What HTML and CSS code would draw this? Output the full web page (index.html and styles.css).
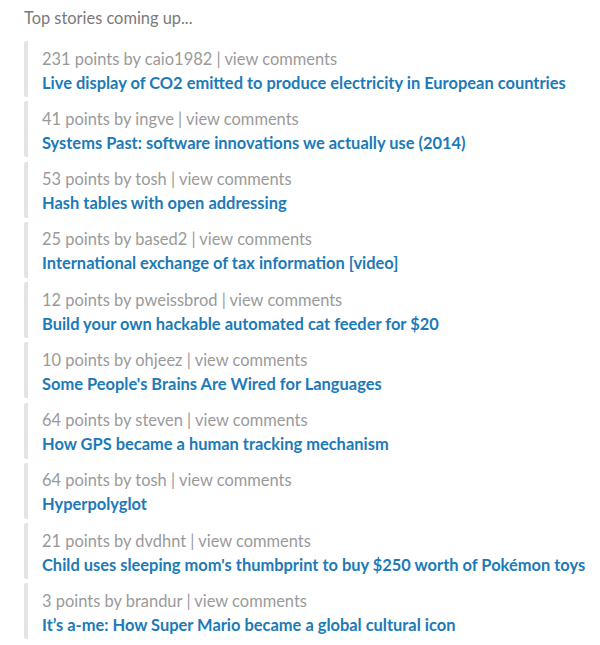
FILE: index.html
```html
<!DOCTYPE html>
<html>
<head>
<meta charset="utf-8">
<link rel="stylesheet" href="styles.css">
</head>
<body>
<div class="page">
  <div class="heading">Top stories coming up...</div>
  <ul class="stories">
    <li class="story"><div class="meta">231 points by caio1982 | view comments</div><a class="title" href="#">Live display of CO2 emitted to produce electricity in European countries</a></li>
    <li class="story"><div class="meta">41 points by ingve | view comments</div><a class="title" href="#">Systems Past: software innovations we actually use (2014)</a></li>
    <li class="story"><div class="meta">53 points by tosh | view comments</div><a class="title" href="#">Hash tables with open addressing</a></li>
    <li class="story"><div class="meta">25 points by based2 | view comments</div><a class="title" href="#">International exchange of tax information [video]</a></li>
    <li class="story"><div class="meta">12 points by pweissbrod | view comments</div><a class="title" href="#">Build your own hackable automated cat feeder for $20</a></li>
    <li class="story"><div class="meta">10 points by ohjeez | view comments</div><a class="title" href="#">Some People's Brains Are Wired for Languages</a></li>
    <li class="story"><div class="meta">64 points by steven | view comments</div><a class="title" href="#">How GPS became a human tracking mechanism</a></li>
    <li class="story"><div class="meta">64 points by tosh | view comments</div><a class="title" href="#">Hyperpolyglot</a></li>
    <li class="story"><div class="meta">21 points by dvdhnt | view comments</div><a class="title" href="#">Child uses sleeping mom's thumbprint to buy $250 worth of Pokémon toys</a></li>
    <li class="story"><div class="meta">3 points by brandur | view comments</div><a class="title" href="#">It’s a-me: How Super Mario became a global cultural icon</a></li>
  </ul>
</div>
</body>
</html>
```
FILE: styles.css
```css
html, body {
  margin: 0;
  padding: 0;
  background: #ffffff;
}
body {
  font-family: Lato, "Open Sans", sans-serif;
}
.page {
  padding: 8px 0 0 24px;
}
.heading {
  font-size: 16.4px;
  line-height: 20px;
  color: #7a7a7a;
  margin-bottom: 13px;
}
.stories {
  list-style: none;
  margin: 0;
  padding: 0;
  display: flex;
  flex-direction: column;
  gap: 4.25px;
}
.story {
  border-left: 4px solid #e4e4e4;
  border-radius: 2px;
  padding: 5.5px 0 1.5px 14px;
  height: 49px;
  display: flex;
  flex-direction: column;
}
.meta {
  font-size: 16.45px;
  line-height: 24px;
  color: #9a9a9a;
}
.title {
  font-size: 16.45px;
  line-height: 25px;
  font-weight: bold;
  color: #1c7ab8;
  text-decoration: none;
  white-space: nowrap;
}
```
